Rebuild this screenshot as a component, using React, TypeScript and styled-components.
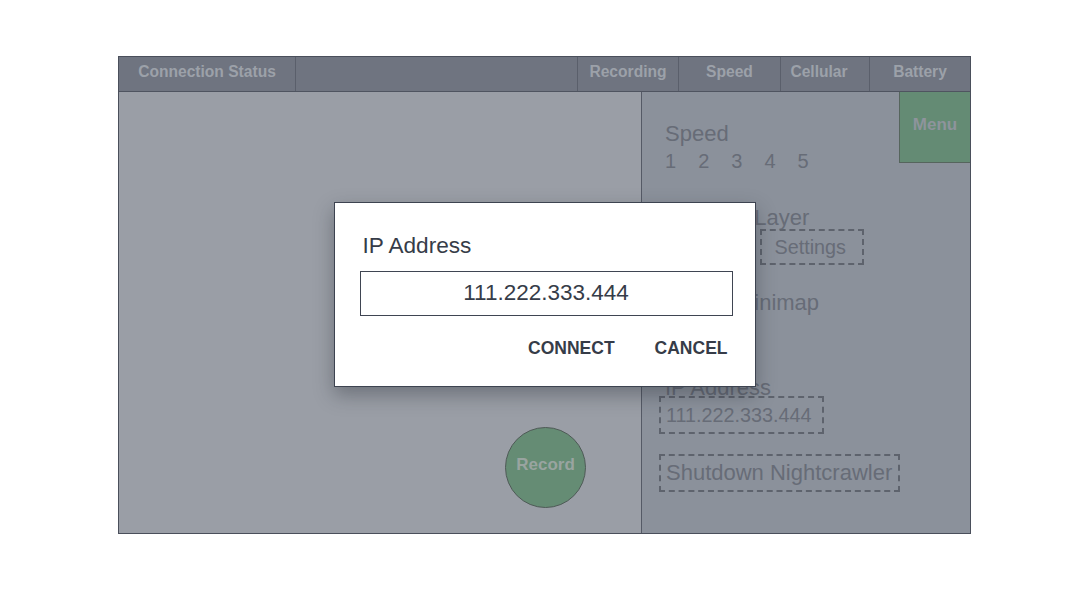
import styled, { createGlobalStyle } from "styled-components";

const GlobalStyle = createGlobalStyle`
  html, body {
    margin: 0;
    padding: 0;
    background: #ffffff;
    font-family: "Liberation Sans", Arial, sans-serif;
  }
  * {
    box-sizing: border-box;
  }
`;

const Page = styled.div`
  width: 100%;
  padding-top: 56px;
`;

const Frame = styled.div`
  position: relative;
  width: 853px;
  height: 478px;
  margin: 0 auto;
  border: 1px solid #4a4f5b;
  display: flex;
  flex-direction: column;
`;

const TopBar = styled.div`
  display: flex;
  height: 35px;
  background-color: #6f7480;
  border-bottom: 1px solid #4f5460;
`;

const StatusCell = styled.div<{ $w: number; $last?: boolean; $shift?: number }>`
  width: ${(p) => p.$w}px;
  flex: none;
  display: flex;
  justify-content: center;
  padding-top: 6px;
  padding-right: ${(p) => p.$shift || 0}px;
  border-right: ${(p) => (p.$last ? "none" : "1px solid #5a5f6b")};
  color: #9ca1a9;
  font-size: 15.6px;
  line-height: 18px;
  font-weight: 700;
`;

const Body = styled.div`
  flex: 1;
  display: flex;
  min-height: 0;
`;

const MapPanel = styled.div`
  position: relative;
  width: 523px;
  flex: none;
  background-color: #9a9ea6;
  border-right: 1px solid #555a66;
`;

const RecordButton = styled.div`
  position: absolute;
  right: 55px;
  bottom: 25px;
  width: 81px;
  height: 81px;
  border-radius: 50%;
  background-color: #658c74;
  border: 1px solid #4e5a56;
  display: flex;
  align-items: center;
  justify-content: center;
  padding-bottom: 5px;
  color: #99a4a0;
  font-size: 17px;
  font-weight: 700;
  line-height: 20px;
`;

const ControlPanel = styled.div`
  position: relative;
  flex: 1;
  background-color: #8b919b;
  padding: 29px 0 0 17px;
  display: flex;
  flex-direction: column;
  align-items: flex-start;
`;

const MenuButton = styled.div`
  position: absolute;
  top: 0;
  right: 0;
  width: 71px;
  height: 71px;
  background-color: #648b74;
  border-left: 1px solid #56655d;
  border-bottom: 1px solid #56655d;
  display: flex;
  justify-content: center;
  padding-top: 23px;
  color: #8e949c;
  font-size: 17px;
  font-weight: 700;
  line-height: 20px;
`;

const Label = styled.div<{ $mt?: number }>`
  margin-top: ${(p) => p.$mt || 0}px;
  padding-left: 6px;
  color: #676c77;
  font-size: 22px;
  line-height: 25px;
  white-space: nowrap;
`;

const Steps = styled.div`
  display: flex;
  gap: 22px;
  margin-top: 4px;
  padding-left: 6px;
  color: #676c77;
  font-size: 20px;
  line-height: 23px;
`;

const ButtonRow = styled.div<{ $mt?: number }>`
  display: flex;
  gap: 12px;
  margin-top: ${(p) => p.$mt || 0}px;
`;

const DashedButton = styled.div<{
  $size?: number;
  $mt?: number;
  $pl?: number;
  $pr?: number;
  $py?: number;
}>`
  margin-top: ${(p) => p.$mt || 0}px;
  border: 2px dashed #5e636d;
  padding: ${(p) => p.$py ?? 5}px ${(p) => p.$pr ?? 5}px ${(p) => p.$py ?? 5}px
    ${(p) => p.$pl ?? 5}px;
  color: #676c77;
  font-size: ${(p) => p.$size || 19.8}px;
  line-height: ${(p) => (p.$size ? p.$size + 2 : 22)}px;
  white-space: nowrap;
`;

const Overlay = styled.div`
  position: absolute;
  inset: 0;
  padding-bottom: 2px;
  display: flex;
  align-items: center;
  justify-content: center;
`;

const Dialog = styled.div`
  width: 422px;
  background-color: #ffffff;
  border: 1px solid #3d4350;
  box-shadow: 0 8px 18px rgba(30, 34, 44, 0.35);
  padding: 30px 22px 20px 25px;
  display: flex;
  flex-direction: column;
  color: #363c48;
`;

const DialogTitle = styled.div`
  padding-left: 3px;
  font-size: 22.6px;
  line-height: 26px;
`;

const AddressField = styled.div`
  margin-top: 12px;
  height: 45px;
  border: 1px solid #3f4552;
  display: flex;
  align-items: center;
  justify-content: center;
  padding-bottom: 1px;
  font-size: 22.5px;
`;

const Actions = styled.div`
  display: flex;
  justify-content: flex-end;
  gap: 30px;
  margin-top: 14px;
`;

const TextButton = styled.div`
  padding: 8px 5px;
  font-size: 17.5px;
  line-height: 20px;
  font-weight: 700;
  color: #363c48;
`;

const statusCells = [
  { label: "Connection Status", w: 177 },
  { label: "", w: 282 },
  { label: "Recording", w: 101 },
  { label: "Speed", w: 102 },
  { label: "Cellular", w: 89, shift: 12 },
  { label: "Battery", w: 100, last: true },
];

export default function App() {
  return (
    <>
      <GlobalStyle />
      <Page>
        <Frame>
          <TopBar>
            {statusCells.map((c, i) => (
              <StatusCell key={i} $w={c.w} $last={c.last} $shift={c.shift}>
                {c.label}
              </StatusCell>
            ))}
          </TopBar>
          <Body>
            <MapPanel>
              <RecordButton>Record</RecordButton>
            </MapPanel>
            <ControlPanel>
              <MenuButton>Menu</MenuButton>
              <Label>Speed</Label>
              <Steps>
                {[1, 2, 3, 4, 5].map((n) => (
                  <span key={n}>{n}</span>
                ))}
              </Steps>
              <Label $mt={32}>Map Tile Layer</Label>
              <ButtonRow $mt={-1}>
                <DashedButton $pl={18} $pr={18}>
                  Show
                </DashedButton>
                <DashedButton $pl={12} $pr={16}>
                  Settings
                </DashedButton>
              </ButtonRow>
              <Label $mt={25}>Toggle Minimap</Label>
              <Label $mt={60}>IP Address</Label>
              <DashedButton $mt={-4} $py={6} $pr={10}>
                111.222.333.444
              </DashedButton>
              <DashedButton $mt={20} $size={22} $pr={6}>
                Shutdown Nightcrawler
              </DashedButton>
            </ControlPanel>
          </Body>
          <Overlay>
            <Dialog>
              <DialogTitle>IP Address</DialogTitle>
              <AddressField>111.222.333.444</AddressField>
              <Actions>
                <TextButton>CONNECT</TextButton>
                <TextButton>CANCEL</TextButton>
              </Actions>
            </Dialog>
          </Overlay>
        </Frame>
      </Page>
    </>
  );
}
